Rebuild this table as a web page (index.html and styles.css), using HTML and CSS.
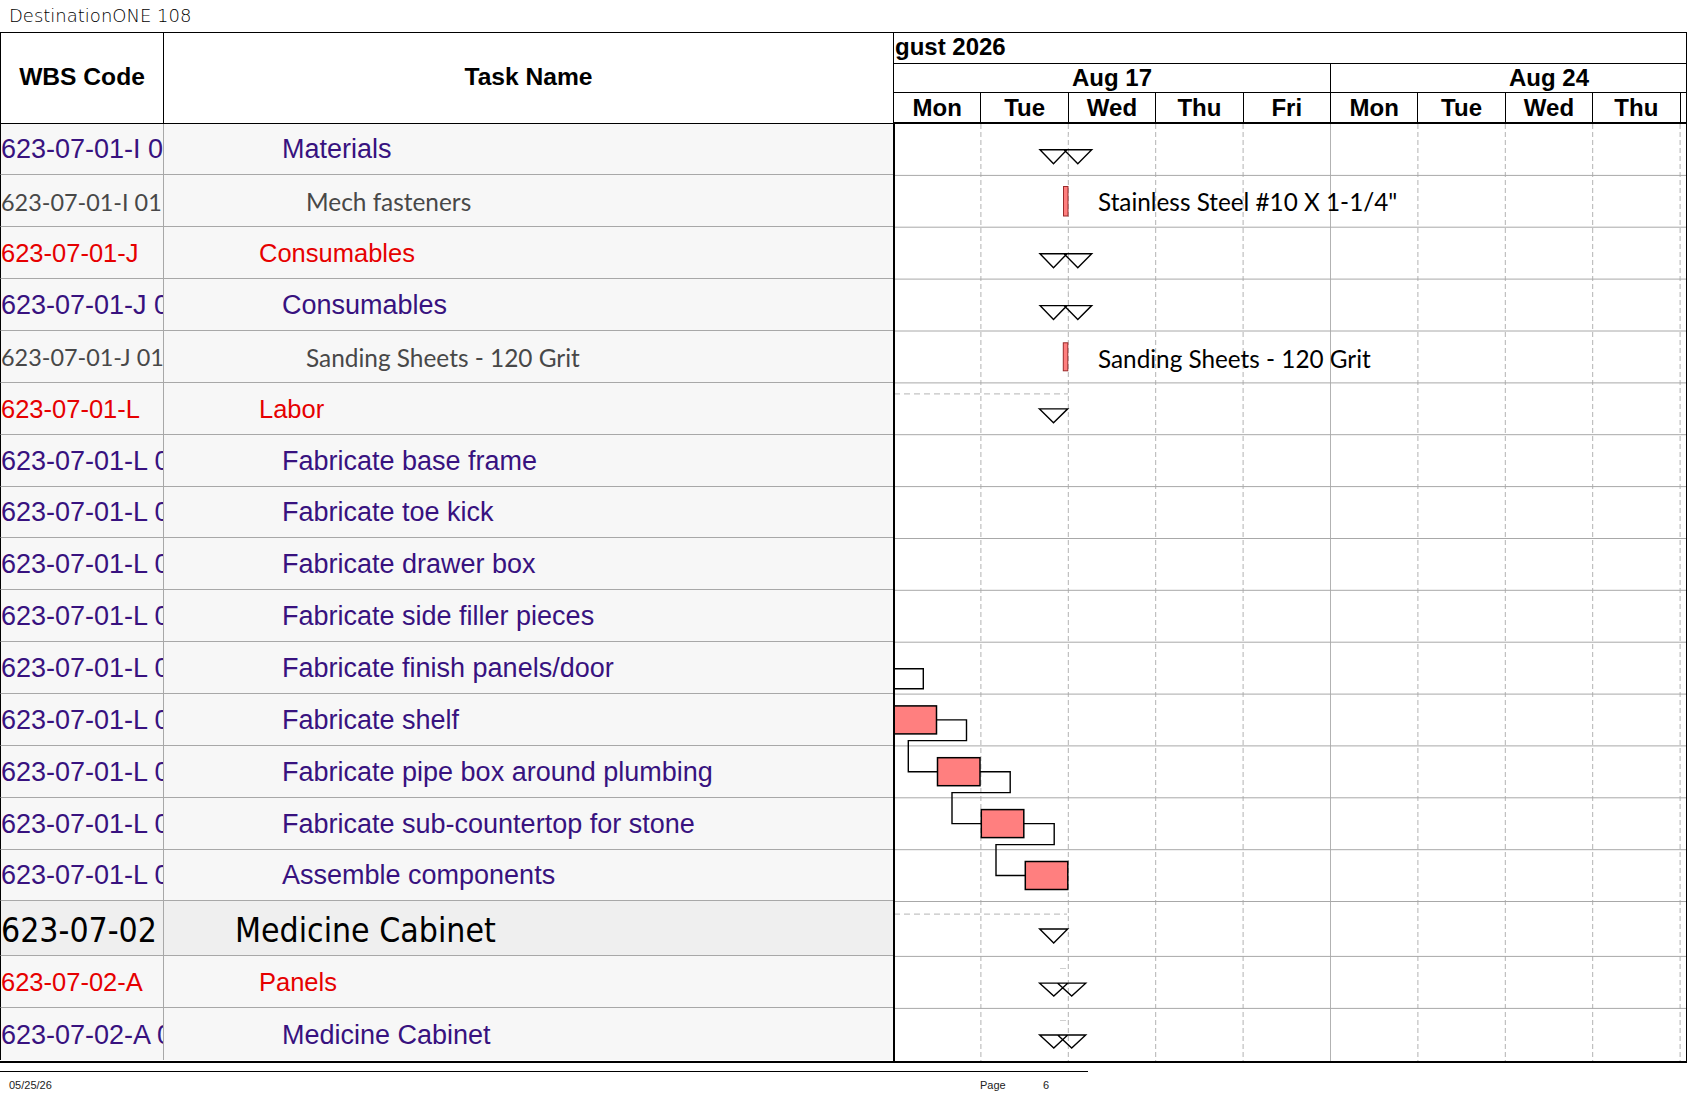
FILE: index.html
```html
<!DOCTYPE html>
<html>
<head>
<meta charset="utf-8">
<title>DestinationONE 108</title>
<link rel="stylesheet" href="styles.css">
</head>
<body>
<div class="title">DestinationONE 108</div>
<div class="sheet">
  <div class="hdr">
    <div class="hcell wbs-h">WBS Code</div>
    <div class="hcell task-h">Task Name</div>
    <div class="tl">
      <div class="tl-month"><span class="month">August 2026</span></div>
      <div class="tl-weeks"><div class="week">Aug 17</div><div class="week">Aug 24</div></div>
      <div class="tl-days">
        <div class="day">Mon</div><div class="day">Tue</div><div class="day">Wed</div><div class="day">Thu</div><div class="day">Fri</div>
        <div class="day">Mon</div><div class="day">Tue</div><div class="day">Wed</div><div class="day">Thu</div><div class="day">Fri</div>
      </div>
    </div>
  </div>
  <div class="body">
    <div class="tbl">
      <div class="row r-purple"><div class="wbs">623-07-01-I 01</div><div class="task">Materials</div></div>
      <div class="row r-grey"><div class="wbs">623-07-01-I 01</div><div class="task">Mech fasteners</div></div>
      <div class="row r-red"><div class="wbs">623-07-01-J</div><div class="task">Consumables</div></div>
      <div class="row r-purple"><div class="wbs">623-07-01-J 01</div><div class="task">Consumables</div></div>
      <div class="row r-grey"><div class="wbs">623-07-01-J 01</div><div class="task">Sanding Sheets - 120 Grit</div></div>
      <div class="row r-red"><div class="wbs">623-07-01-L</div><div class="task">Labor</div></div>
      <div class="row r-purple"><div class="wbs">623-07-01-L 01</div><div class="task">Fabricate base frame</div></div>
      <div class="row r-purple"><div class="wbs">623-07-01-L 02</div><div class="task">Fabricate toe kick</div></div>
      <div class="row r-purple"><div class="wbs">623-07-01-L 03</div><div class="task">Fabricate drawer box</div></div>
      <div class="row r-purple"><div class="wbs">623-07-01-L 04</div><div class="task">Fabricate side filler pieces</div></div>
      <div class="row r-purple"><div class="wbs">623-07-01-L 05</div><div class="task">Fabricate finish panels/door</div></div>
      <div class="row r-purple"><div class="wbs">623-07-01-L 06</div><div class="task">Fabricate shelf</div></div>
      <div class="row r-purple"><div class="wbs">623-07-01-L 07</div><div class="task">Fabricate pipe box around plumbing</div></div>
      <div class="row r-purple"><div class="wbs">623-07-01-L 08</div><div class="task">Fabricate sub-countertop for stone</div></div>
      <div class="row r-purple"><div class="wbs">623-07-01-L 09</div><div class="task">Assemble components</div></div>
      <div class="row r-big"><div class="wbs">623-07-02</div><div class="task">Medicine Cabinet</div></div>
      <div class="row r-red r-short"><div class="wbs">623-07-02-A</div><div class="task">Panels</div></div>
      <div class="row r-purple r-short r-last"><div class="wbs">623-07-02-A 01</div><div class="task">Medicine Cabinet</div></div>
    </div>
    <div class="chart">
      <svg class="gantt" width="791" height="937" viewBox="1 0 791 937" xmlns="http://www.w3.org/2000/svg">
        <g class="vgrid">
          <line x1="86.9" y1="0" x2="86.9" y2="937"/>
          <line x1="174.3" y1="0" x2="174.3" y2="937"/>
          <line x1="261.7" y1="0" x2="261.7" y2="937"/>
          <line x1="349.1" y1="0" x2="349.1" y2="937"/>
          <line x1="523.9" y1="0" x2="523.9" y2="937"/>
          <line x1="611.3" y1="0" x2="611.3" y2="937"/>
          <line x1="698.7" y1="0" x2="698.7" y2="937"/>
          <line x1="786.1" y1="0" x2="786.1" y2="937"/>
        </g>
        <line class="wk" x1="436.5" y1="0" x2="436.5" y2="937"/>
        <g class="hgrid">
          <line x1="0" y1="51.4" x2="792" y2="51.4"/>
          <line x1="0" y1="103.2" x2="792" y2="103.2"/>
          <line x1="0" y1="155.1" x2="792" y2="155.1"/>
          <line x1="0" y1="207" x2="792" y2="207"/>
          <line x1="0" y1="258.9" x2="792" y2="258.9"/>
          <line x1="0" y1="310.7" x2="792" y2="310.7"/>
          <line x1="0" y1="362.6" x2="792" y2="362.6"/>
          <line x1="0" y1="414.5" x2="792" y2="414.5"/>
          <line x1="0" y1="466.3" x2="792" y2="466.3"/>
          <line x1="0" y1="518.2" x2="792" y2="518.2"/>
          <line x1="0" y1="570.1" x2="792" y2="570.1"/>
          <line x1="0" y1="621.9" x2="792" y2="621.9"/>
          <line x1="0" y1="673.8" x2="792" y2="673.8"/>
          <line x1="0" y1="725.7" x2="792" y2="725.7"/>
          <line x1="0" y1="777.5" x2="792" y2="777.5"/>
          <line x1="0" y1="832.4" x2="792" y2="832.4"/>
          <line x1="0" y1="884.4" x2="792" y2="884.4"/>
        </g>
        <g class="sumline">
          <line x1="0" y1="269.8" x2="174" y2="269.8"/>
          <line x1="0" y1="790.2" x2="173" y2="790.2"/>
        </g>
        <g class="tick">
          <line x1="174.3" y1="11" x2="174.3" y2="13"/>
          <line x1="174.3" y1="114.7" x2="174.3" y2="116.7"/>
          <line x1="174.3" y1="166.6" x2="174.3" y2="168.6"/>
          <line x1="166" y1="844.5" x2="172" y2="844.5"/>
          <line x1="166" y1="896.5" x2="172" y2="896.5"/>
        </g>
        <g class="ms2">
          <path d="M146,25.8 L159.5,39.8 L173,25.8 Z M170,25.8 L183.8,39.8 L197.7,25.8 Z"/>
          <path transform="translate(0,103.74)" d="M146,26 L159.5,40 L173,26 Z M170,26 L183.8,40 L197.7,26 Z"/>
          <path transform="translate(0,155.61)" d="M146,26 L159.5,40 L173,26 Z M170,26 L183.8,40 L197.7,26 Z"/>
          <path transform="translate(0,832.95)" d="M145.7,26.2 L159.8,39 L173.7,26.2 Z M163.7,26.2 L177.7,39 L191.7,26.2 Z"/>
          <path transform="translate(0,884.95)" d="M145.7,26 L159.8,39 L173.7,26 Z M163.7,26 L177.7,39 L191.7,26 Z"/>
        </g>
        <g class="ms1">
          <path transform="translate(0,259.35)" d="M145.3,25.5 L159.5,39.5 L173.7,25.5 Z"/>
          <path transform="translate(0,778.05)" d="M145.7,27 L159.7,41 L173.7,27 Z"/>
        </g>
        <g class="thin">
          <rect x="169.5" y="62.5" width="4.5" height="29.5"/>
          <rect x="169.3" y="218.8" width="4.5" height="28"/>
        </g>
        <g class="lbl">
          <text x="204" y="87.3">Stainless Steel #10 X 1-1/4"</text>
          <text x="204" y="243.6">Sanding Sheets - 120 Grit</text>
        </g>
        <g class="link">
          <path d="M0,544.8 H29.3 V564.8 H0"/>
          <path d="M42.5,595.9 H72.5 V616.6 H14.3 V647.7 H43.5"/>
          <path d="M86,647.7 H116.2 V668.6 H58 V699.6 H87.3"/>
          <path d="M129.8,699.6 H160.2 V720.6 H102 V751.5 H131.3"/>
        </g>
        <g class="bar">
          <rect x="0" y="581.9" width="42.5" height="28"/>
          <rect x="43.5" y="633.7" width="42.5" height="28"/>
          <rect x="87.3" y="685.6" width="42.5" height="28"/>
          <rect x="131.3" y="737.5" width="42.5" height="28"/>
        </g>
      </svg>
    </div>
  </div>
</div>
<div class="footer">
  <div class="f-date">05/25/26</div>
  <div class="f-page">Page</div>
  <div class="f-num">6</div>
</div>
</body>
</html>
```
FILE: styles.css
```css
html, body {
  margin: 0;
  padding: 0;
  background: #ffffff;
}
body {
  width: 1687px;
  font-family: "Liberation Sans", Arial, sans-serif;
  color: #000;
}

.title {
  height: 32px;
  box-sizing: border-box;
  padding: 4px 0 0 9px;
  font-family: "DejaVu Sans", sans-serif;
  font-weight: 200;
  font-size: 18px;
  line-height: 24px;
  color: #000;
  white-space: nowrap;
}

.sheet {
  width: 1687px;
}

/* ---------- header ---------- */
.hdr {
  display: grid;
  grid-template-columns: 164px 730px 793px;
  border-top: 1px solid #000;
}
.hcell {
  display: flex;
  align-items: center;
  justify-content: center;
  box-sizing: border-box;
  padding-bottom: 1px;
  border-bottom: 1px solid #000;
  border-right: 1px solid #000;
  font-weight: bold;
  font-size: 24.6px;
}
.wbs-h {
  border-left: 1px solid #000;
}

.tl {
  box-sizing: border-box;
  border-right: 1px solid #000;
  overflow: hidden;
  font-weight: bold;
  font-size: 24px;
  white-space: nowrap;
}
.tl-month {
  height: 31px;
  box-sizing: border-box;
  border-bottom: 1px solid #000;
  line-height: 27px;
  overflow: hidden;
}
.month {
  display: inline-block;
  margin-left: -31px;
}
.tl-weeks {
  display: flex;
  height: 29px;
  box-sizing: border-box;
  border-bottom: 1px solid #000;
}
.week {
  flex: 0 0 437px;
  box-sizing: border-box;
  border-right: 1px solid #000;
  text-align: center;
  line-height: 28px;
}
.tl-days {
  display: flex;
  height: 30.5px;
  box-sizing: border-box;
  border-bottom: 2px solid #000;
}
.day {
  flex: 0 0 87.4px;
  box-sizing: border-box;
  border-right: 1px solid #000;
  text-align: center;
  line-height: 30px;
}

/* ---------- body ---------- */
.body {
  display: flex;
  border-bottom: 2px solid #000;
}
.tbl {
  width: 893px;
  flex: 0 0 893px;
}
.row {
  display: grid;
  grid-template-columns: 163px 729px;
  height: 51.87px;
  box-sizing: border-box;
  padding-top: 2px;
  border-left: 1px solid #000;
  border-bottom: 1px solid #a8a8a8;
  background: #f7f7f7;
  white-space: nowrap;
}
.row.r-short {
  height: 52px;
}
.row.r-last {
  border-bottom: none;
}
.wbs {
  display: flex;
  align-items: center;
  overflow: hidden;
  border-right: 1px solid #a8a8a8;
  margin-top: -2px;
  padding-top: 2px;
}
.task {
  display: flex;
  align-items: center;
  overflow: hidden;
}

.r-purple {
  color: #38127f;
  font-size: 27px;
}
.r-purple .task {
  padding-left: 118px;
}

.r-red {
  color: #e60000;
  font-size: 25.5px;
}
.r-red .task {
  padding-left: 95px;
}

.r-grey {
  color: #484848;
  font-family: Lato, "Open Sans", sans-serif;
  font-size: 24.4px;
}
.r-grey .wbs {
  font-size: 23.4px;
}
.r-grey .task {
  padding-left: 142px;
}

.r-big {
  height: 54.9px;
  padding-top: 4px;
  background: #efefef;
  color: #000;
  font-family: "DejaVu Sans Condensed", "DejaVu Sans", sans-serif;
  font-stretch: condensed;
  font-size: 33.5px;
}
.r-big .wbs {
  margin-top: -4px;
  padding-top: 4px;
}
.r-big .task {
  padding-left: 71px;
}

.chart {
  flex: 0 0 794px;
  width: 794px;
  box-sizing: border-box;
  border-left: 2px solid #000;
  border-right: 1px solid #000;
  background: #fff;
}
.gantt {
  display: block;
}
.vgrid line {
  stroke: #b2b2b2;
  stroke-width: 1;
  stroke-dasharray: 5 3;
}
.wk {
  stroke: #b2b2b2;
  stroke-width: 1;
}
.hgrid line {
  stroke: #a8a8a8;
  stroke-width: 1;
}
.sumline line {
  stroke: #c4c4c4;
  stroke-width: 1.2;
  stroke-dasharray: 6 4;
}
.tick line {
  stroke: #d0d0d0;
  stroke-width: 1;
}
.ms2 path {
  fill: none;
  stroke: #000;
  stroke-width: 1.4;
  stroke-linejoin: miter;
}
.ms1 path {
  fill: #fff;
  stroke: #000;
  stroke-width: 1.4;
}
.thin rect {
  fill: #ff7f7f;
  stroke: #9a2a2a;
  stroke-width: 1;
}
.lbl text {
  font-family: Lato, "Open Sans", sans-serif;
  font-size: 24.3px;
  fill: #000;
}
.link path {
  fill: none;
  stroke: #000;
  stroke-width: 1.4;
}
.bar rect {
  fill: #ff7f7f;
  stroke: #000;
  stroke-width: 1.5;
}

/* ---------- footer ---------- */
.footer {
  display: flex;
  width: 1088px;
  margin-top: 8px;
  border-top: 1.5px solid #000;
  padding-top: 7px;
  font-family: "Liberation Sans Narrow", "Liberation Sans", sans-serif;
  font-size: 11px;
  line-height: 13px;
  color: #222;
}
.f-date {
  flex: 0 0 980px;
  box-sizing: border-box;
  padding-left: 9px;
}
.f-page {
  flex: 0 0 63px;
}
```
